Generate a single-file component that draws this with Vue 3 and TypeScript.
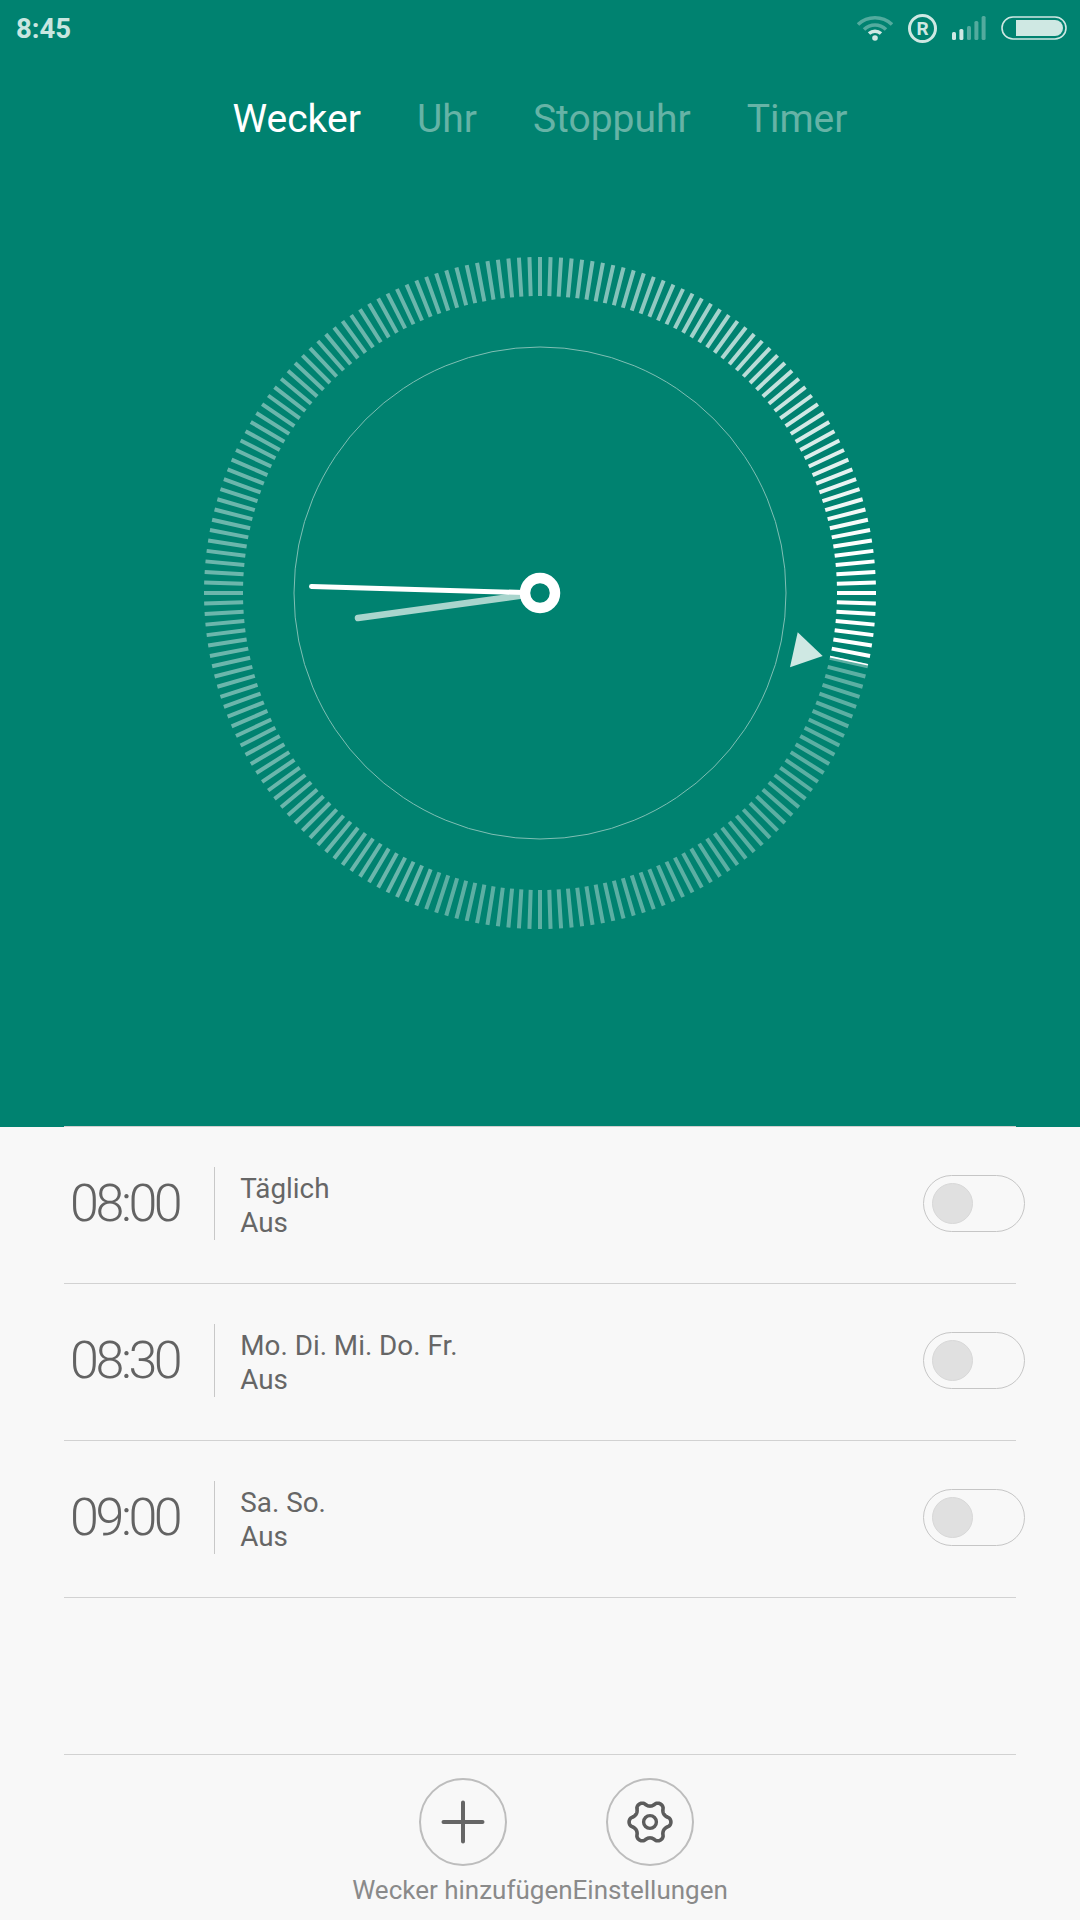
<template>
  <div class="screen">
    <section class="clock-panel">
      <header class="status-bar">
        <span class="status-time">8:45</span>
        <div class="status-icons">
          <svg class="wifi" width="36" height="26" viewBox="0 0 36 26">
            <path d="M1 9.5C10.5 0.5 25.5 0.5 35 9.5" class="wifi-dim" />
            <path d="M7 14.5C13.5 8.5 22.5 8.5 29 14.5" class="wifi-dim" />
            <path d="M12 18.5C15.5 15.5 20.5 15.5 24 18.5" class="wifi-on" />
            <circle cx="18" cy="23" r="2.8" fill="#cfe8e3" />
          </svg>
          <span class="reg-mark">R</span>
          <svg width="34" height="24" viewBox="0 0 34 24">
            <rect
              v-for="bar in signalBars"
              :key="bar.x"
              :x="bar.x"
              :y="bar.y"
              width="4"
              :height="24 - bar.y"
              rx="1.5"
              fill="#cfe8e3"
              :opacity="bar.opacity"
            />
          </svg>
          <svg width="66" height="24" viewBox="0 0 66 24">
            <rect x="1" y="1" width="64" height="22" rx="11" fill="none" stroke="#cfe8e3" stroke-width="1.6" />
            <path d="M15 4H54a8 8 0 0 1 0 16H15Z" fill="#cfe8e3" />
          </svg>
        </div>
      </header>

      <nav class="tabs">
        <span v-for="tab in tabs" :key="tab" class="tab" :class="{ active: tab === 'Wecker' }">{{ tab }}</span>
      </nav>

      <svg class="dial" width="700" height="700" viewBox="0 0 700 700">
        <circle cx="350" cy="350" r="246" fill="none" stroke="#7fbfb4" stroke-width="1" />
        <line
          v-for="tick in ticks"
          :key="tick.id"
          :x1="tick.x1"
          :y1="tick.y1"
          :x2="tick.x2"
          :y2="tick.y2"
          stroke="#fff"
          stroke-width="4"
          :opacity="tick.opacity"
        />
        <line x1="640" y1="413.6" x2="677.9" y2="421.8" stroke="#fff" stroke-width="1.6" />
        <polygon points="607.7,389.3 632.7,413 600,424.3" fill="#cfe8e3" />
        <line x1="168" y1="375" x2="350" y2="350" stroke="#a9d5cd" stroke-width="6.5" stroke-linecap="round" />
        <line x1="121.5" y1="343.5" x2="350" y2="350" stroke="#fff" stroke-width="5" stroke-linecap="round" />
        <circle cx="350" cy="350" r="15" fill="#008270" stroke="#fff" stroke-width="10.5" />
      </svg>
    </section>

    <section class="alarm-list">
      <div v-for="alarm in alarms" :key="alarm.time" class="alarm-row">
        <span class="alarm-time">{{ alarm.time }}</span>
        <div class="alarm-info">
          <span>{{ alarm.days }}</span>
          <span>Aus</span>
        </div>
        <div class="switch"><span class="knob"></span></div>
      </div>
    </section>

    <footer class="toolbar">
      <div class="tool">
        <span class="tool-btn add">
          <svg width="44" height="44" viewBox="0 0 44 44">
            <path d="M22 2.5V41.5M2.5 22H41.5" fill="none" stroke="#666" stroke-width="4" stroke-linecap="round" />
          </svg>
        </span>
        <span class="tool-label">Wecker hinzufügen</span>
      </div>
      <div class="tool">
        <span class="tool-btn">
          <svg width="48" height="48" viewBox="0 0 48 48">
            <path :d="gearPath" fill="none" stroke="#5c5c5c" stroke-width="3.6" stroke-linejoin="round" />
            <circle cx="24" cy="24" r="6.4" fill="none" stroke="#5c5c5c" stroke-width="3.4" />
          </svg>
        </span>
        <span class="tool-label">Einstellungen</span>
      </div>
    </footer>
  </div>
</template>

<script setup lang="ts">
const tabs = ['Wecker', 'Uhr', 'Stoppuhr', 'Timer']

const alarms = [
  { time: '08:00', days: 'Täglich' },
  { time: '08:30', days: 'Mo. Di. Mi. Do. Fr.' },
  { time: '09:00', days: 'Sa. So.' },
]

const signalBars = [
  { x: 0, y: 16, opacity: 1 },
  { x: 7.4, y: 13, opacity: 1 },
  { x: 15, y: 10, opacity: 0.4 },
  { x: 22.4, y: 5, opacity: 0.4 },
  { x: 29.6, y: 0, opacity: 0.4 },
]

// Strichring: 200 Striche, hell bis zum Pfeil
const TICK_COUNT = 200
const ARROW_ANGLE = 102

function tickOpacity(deg: number): number {
  if (deg > ARROW_ANGLE) return deg < 200 ? 0.36 : 0.42
  return Math.min(1, 0.42 + (0.58 * deg) / 82)
}

const ticks = Array.from({ length: TICK_COUNT }, (_, id) => {
  const deg = (id * 360) / TICK_COUNT
  const rad = (deg * Math.PI) / 180
  const sin = Math.sin(rad)
  const cos = Math.cos(rad)
  return {
    id,
    x1: 350 + 297 * sin,
    y1: 350 - 297 * cos,
    x2: 350 + 336 * sin,
    y2: 350 - 336 * cos,
    opacity: tickOpacity(deg),
  }
})

// Zahnrad mit sechs flachen Zacken
const gearPath =
  Array.from({ length: 144 }, (_, i) => {
    const a = (i / 144) * Math.PI * 2
    const c = Math.cos(6 * a)
    const r = 18.4 + 2.5 * Math.sign(c) * Math.pow(Math.abs(c), 0.7)
    return `${i ? 'L' : 'M'}${(24 + r * Math.cos(a)).toFixed(2)} ${(24 + r * Math.sin(a)).toFixed(2)}`
  }).join('') + 'Z'
</script>

<style scoped>
.screen {
  width: 1080px;
  height: 1920px;
  display: flex;
  flex-direction: column;
  overflow: hidden;
  background: #f8f8f8;
  font-family: Roboto, "Liberation Sans", sans-serif;
}

.clock-panel {
  height: 1127px;
  flex: none;
  background: #008270;
  display: flex;
  flex-direction: column;
}

.status-bar {
  height: 56px;
  display: flex;
  align-items: center;
  justify-content: space-between;
  padding: 0 13px 0 16px;
}

.status-time {
  font-size: 27.5px;
  font-weight: 700;
  color: #c9e6e0;
}

.status-icons {
  display: flex;
  align-items: center;
  gap: 15px;
}

.wifi-dim,
.wifi-on {
  fill: none;
  stroke: #cfe8e3;
  stroke-width: 3.6;
}

.wifi-dim {
  opacity: 0.4;
}

.reg-mark {
  width: 29px;
  height: 29px;
  box-sizing: border-box;
  border: 3px solid #cfe8e3;
  border-radius: 50%;
  display: flex;
  align-items: center;
  justify-content: center;
  font-size: 19px;
  font-weight: 700;
  color: #cfe8e3;
}

.tabs {
  height: 187px;
  box-sizing: border-box;
  padding-top: 41px;
  display: flex;
  justify-content: center;
  gap: 56px;
  font-size: 39px;
  line-height: 44px;
}

.tab {
  color: #66b3a6;
}

.tab.active {
  color: #fff;
}

.dial {
  display: block;
  align-self: center;
}

.alarm-list {
  margin: -1px 64px 0;
  border-top: 1px solid #cfcfcf;
}

.alarm-row {
  height: 157px;
  box-sizing: border-box;
  border-bottom: 1.5px solid #d2d2d2;
  padding: 0 0 3px 6px;
  display: flex;
  align-items: center;
}

.alarm-time {
  font-size: 52px;
  font-weight: 300;
  letter-spacing: -3.4px;
  color: #636363;
  margin-right: 35px;
}

.alarm-info {
  flex: 1;
  height: 73px;
  box-sizing: border-box;
  padding: 5px 0 0 25px;
  display: flex;
  flex-direction: column;
  justify-content: center;
  border-left: 1.5px solid #c8c8c8;
  font-size: 27.8px;
  line-height: 34px;
  color: #666;
}

.switch {
  width: 102px;
  height: 57px;
  box-sizing: border-box;
  margin-right: -9px;
  padding-left: 8px;
  border: 1.5px solid #c6c6c6;
  border-radius: 29px;
  display: flex;
  align-items: center;
}

.knob {
  width: 41px;
  height: 41px;
  box-sizing: border-box;
  border: 1px solid #d8d8d8;
  border-radius: 50%;
  background: #e0e0e0;
}

.toolbar {
  margin: 156px 64px 0;
  padding-top: 23px;
  border-top: 1.5px solid #d2d2d2;
  display: flex;
  justify-content: center;
}

.tool {
  display: flex;
  flex-direction: column;
  align-items: center;
}

.tool-btn {
  width: 88px;
  height: 88px;
  box-sizing: border-box;
  border: 2px solid #bdbdbd;
  border-radius: 50%;
  display: flex;
  align-items: center;
  justify-content: center;
}

.tool-btn.add {
  margin-left: 2px;
}

.tool-label {
  margin-top: 8px;
  font-size: 26px;
  line-height: 32px;
  color: #8a8a8a;
  white-space: nowrap;
}
</style>
